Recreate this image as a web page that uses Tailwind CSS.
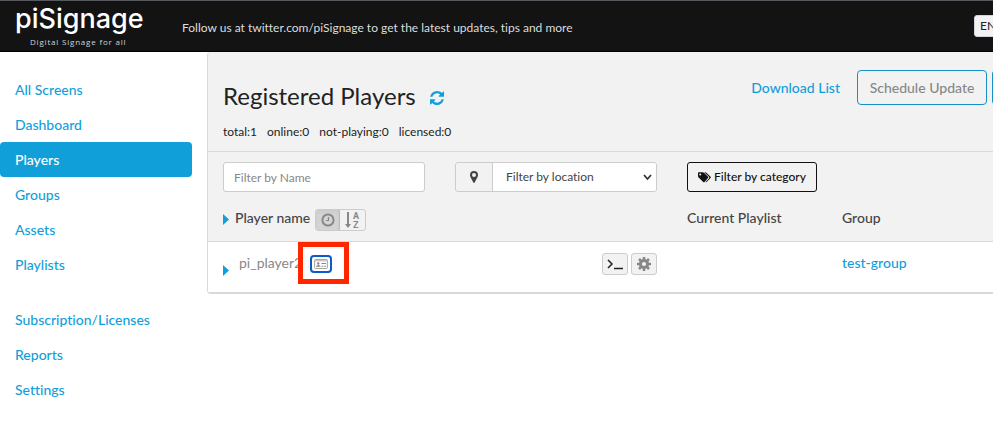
<!DOCTYPE html>
<html lang="en">
<head>
  <meta charset="UTF-8" />
  <meta name="viewport" content="width=device-width, initial-scale=1.0" />
  <title>Players | piSignage</title>
  <script src="https://cdn.jsdelivr.net/npm/@tailwindcss/browser@4"></script>
</head>
<body class="bg-white font-['Lato',sans-serif] text-sm text-[#444] overflow-x-hidden [font-variant-ligatures:none]">
  <!-- Top bar -->
  <header class="flex h-[52px] border-t border-t-[#55585c] border-b border-b-black bg-[#131313]">
    <a href="#" class="w-[182px] shrink-0 pl-[15px] text-white">
      <span class="block h-9 font-['Inter',sans-serif] text-[27px] leading-9 font-medium">piSignage</span>
      <span class="block pl-[15px] text-[8px] leading-[10px] tracking-widest text-gray-300 font-['Open_Sans',sans-serif]">Digital Signage for all</span>
    </a>
    <p class="pt-[19px] text-xs leading-4 text-[#ddd] whitespace-nowrap">Follow us at twitter.com/piSignage to get the latest updates, tips and more</p>
    <button class="ml-auto -mr-4 mt-[14px] h-[22px] w-[35px] shrink-0 rounded-[3px] border border-gray-300 bg-[#f2f2f2] pl-[5px] text-left text-xs text-[#222]">EN</button>
  </header>

  <div class="flex">
    <!-- Sidebar -->
    <nav class="w-48 shrink-0 pt-5 mr-[15px] text-[#119fda] font-medium">
      <ul class="leading-[35px]">
        <li><a href="#" class="block pl-[15px]">All Screens</a></li>
        <li><a href="#" class="block pl-[15px]">Dashboard</a></li>
        <li><a href="#" class="block pl-[15px] rounded bg-[#119fda] text-white">Players</a></li>
        <li><a href="#" class="block pl-[15px]">Groups</a></li>
        <li><a href="#" class="block pl-[15px]">Assets</a></li>
        <li><a href="#" class="block pl-[15px]">Playlists</a></li>
        <li class="mt-5"><a href="#" class="block pl-[15px]">Subscription/Licenses</a></li>
        <li><a href="#" class="block pl-[15px]">Reports</a></li>
        <li><a href="#" class="block pl-[15px]">Settings</a></li>
      </ul>
    </nav>

    <main class="grow min-w-0 self-start rounded-l border-l border-b-2 border-[#d9d9d9] bg-[#f2f2f2]">
      <div class="flex h-[100px] justify-between border-b border-[#d9d9d9] pl-[15px] overflow-hidden">
        <div class="pt-7">
          <h1 class="flex items-center gap-[14px] text-2xl leading-8 text-[#222]">Registered Players
            <button aria-label="Refresh" class="mt-1 text-[#119fda]">
              <svg class="size-[14px]" viewBox="0 0 1536 1536" fill="currentColor"><path d="M1511 928q0 5-1 7-64 268-268 434.500T764 1536q-146 0-282.500-55T238 1324l-129 129q-19 19-45 19t-45-19-19-45V960q0-26 19-45t45-19h448q26 0 45 19t19 45-19 45l-137 137q71 66 161 102t187 36q134 0 250-65t186-179q11-17 53-117 8-23 30-23h192q13 0 22.500 9.500t9.500 22.500zm25-800v448q0 26-19 45t-45 19h-448q-26 0-45-19t-19-45 19-45l138-138Q969 256 768 256q-134 0-250 65T332 500q-11 17-53 117-8 23-30 23H50q-13 0-22.500-9.500T18 608v-7q65-268 270-434.500T768 0q146 0 284 55.500T1297 212l130-129q19-19 45-19t45 19 19 45z"/></svg>
            </button>
          </h1>
          <p class="flex gap-[10px] pt-3 text-xs leading-4 text-[#222]">
            <span>total:1</span><span>online:0</span><span>not-playing:0</span><span>licensed:0</span>
          </p>
        </div>
        <div class="flex items-start gap-[5px] -mr-24 pt-[18px]">
          <a href="#" class="mr-3 leading-9 text-[#119fda] font-medium">Download List</a>
          <button class="h-[35px] w-[130px] rounded border border-[#1591c6] text-[#888] font-medium">Schedule Update</button>
          <button aria-label="More actions" class="h-[35px] w-[97px] rounded border border-[#1591c6] bg-[#119fda]"></button>
        </div>
      </div>

      <!-- Filters -->
      <form class="flex gap-[30px] px-[15px] py-[10px] text-xs">
        <input type="text" aria-label="Filter by Name" placeholder="Filter by Name" class="h-[30px] w-[202px] rounded-[3px] border border-[#ccc] bg-white px-[10px] placeholder:text-[#888]" />
        <div class="flex h-[30px] w-[202px] rounded-[3px] border border-[#ccc]">
          <label for="location" aria-label="Location" class="flex w-9 shrink-0 items-center justify-center">
            <svg class="h-3 w-2" viewBox="0 0 8 12" fill="#444"><path fill-rule="evenodd" d="M4 0a4 4 0 0 0-4 4c0 1 .3 1.600.6 2.200L3.300 11.600q.7.800 1.400 0L7.400 6.200C7.700 5.600 8 5 8 4a4 4 0 0 0-4-4zm0 2a2 2 0 1 1 0 4 2 2 0 0 1 0-4z"/></svg>
          </label>
          <div class="relative grow border-l border-[#ccc]">
            <select id="location" class="h-full w-full appearance-none rounded-r-[2px] bg-white pl-[13px] text-[#444]">
              <option>Filter by location</option>
            </select>
            <svg class="pointer-events-none absolute right-1 top-[11px] h-[7px] w-[9px]" viewBox="0 0 9 7" fill="none" stroke="#333" stroke-width="1.800"><path d="M1 1l3.500 4L8 1"/></svg>
          </div>
        </div>
        <button type="button" class="flex h-[30px] w-[130px] items-center justify-center gap-[3px] rounded-[3px] border border-[#111] text-[#111] font-medium whitespace-nowrap">
          <svg class="h-[11px] w-[13px]" viewBox="0 0 13 11" fill="currentColor"><path fill-rule="evenodd" d="M0 1.200Q0 .2 1 .2h3.600q.8 0 1.400.6l4 4q.6.600 0 1.300L6.500 9.900q-.7.600-1.300 0L.6 5.400Q0 4.800 0 4zM2.200 1.400a1 1 0 1 0 0 2 1 1 0 0 0 0-2z"/><path d="M6.300.2h.8q.7 0 1.300.6l4.100 4q.7.700 0 1.300L8.900 9.800q-.7.800-1.400.2l3.400-3.500q.8-1 0-1.800z"/></svg>
          Filter by category
        </button>
      </form>

      <table class="w-full table-fixed text-left">
        <colgroup>
          <col class="w-[394px]" /><col class="w-[85px]" /><col class="w-[155px]" /><col />
        </colgroup>
        <thead>
          <tr class="h-[39px] border-b border-[#d9d9d9]">
            <th class="pb-1 pl-[15px] font-medium">
              <div class="flex items-center">
                <svg class="mr-[6px] h-[11px] w-[6px]" viewBox="0 0 6 11" fill="#119fda"><path d="M0 0l6 5.500L0 11z"/></svg>
                <span class="pb-[2px]">Player name</span>
                <div class="ml-[5px] mt-[2px] flex h-[22px] w-[51px] overflow-hidden rounded-[3px] border border-[#ccc] text-[#888]">
                  <button aria-label="Sort by time" class="flex w-6 items-center justify-center border-r border-[#bbb] bg-[#d4d4d4] inset-shadow-sm">
                    <svg class="size-[14px]" viewBox="0 0 14 14" fill="none" stroke="currentColor"><circle cx="7" cy="7" r="5.600" stroke-width="2"/><path d="M7.500 4v3.500H5" stroke-width="1.200"/></svg>
                  </button>
                  <button aria-label="Sort by name" class="flex grow items-center justify-center">
                    <svg class="h-[18px] w-[15px]" viewBox="0 0 15 18" fill="currentColor"><path d="M2 1h2v12h2l-3 4-3-4h2z"/><text x="8" y="8" font-family="Roboto" font-size="9" font-weight="bold">A</text><text x="8" y="17" font-family="Roboto" font-size="9" font-weight="bold">Z</text></svg>
                  </button>
                </div>
              </div>
            </th>
            <th></th>
            <th class="pb-[6px] font-medium">Current Playlist</th>
            <th class="pb-[6px] font-medium">Group</th>
          </tr>
        </thead>
        <tbody class="bg-white">
          <tr class="h-[51px]">
            <td class="relative pl-[15px]">
              <div class="flex items-center">
                <svg class="mr-[10px] mt-2 h-[11px] w-[6px]" viewBox="0 0 6 11" fill="#119fda"><path d="M0 0l6 5.500L0 11z"/></svg>
                <span class="pb-[7px] text-[#888]">pi_player2</span>
              </div>
              <!-- highlight around the licence card button -->
              <div class="absolute left-[90px] top-0 flex h-[42px] w-[51px] border-5 border-[#ff2600] bg-white pl-[7px] pt-2">
                <button aria-label="License" class="flex h-[18px] w-[22px] items-center justify-center rounded border-2 border-[#0b5cc4] bg-white">
                  <svg class="h-[10px] w-[14px]" viewBox="0 0 15 11"><rect x=".5" y=".5" width="14" height="10" rx="1" fill="#fff" stroke="#999"/><path d="M1 2h13" stroke="#aaa"/><circle cx="4.500" cy="5" r="1.300" fill="#888"/><path d="M2 8.500q0-2 2.500-2t2.500 2zM8 4.500h5v1H8zM8 7.500h2v1H8zM11 7.500h2v1h-2z" fill="#888"/></svg>
                </button>
              </div>
            </td>
            <td>
              <div class="flex gap-[3px] pb-[6px]">
                <button aria-label="Shell" class="flex h-[22px] w-[26px] items-center justify-center rounded-[3px] border border-[#ccc] bg-[#f2f2f2]">
                  <svg class="h-3 w-4" viewBox="0 0 16 12" fill="none" stroke="#222" stroke-width="1.500"><path d="M1 2l4 4-4 4M7 10.500h9"/></svg>
                </button>
                <button aria-label="Settings" class="flex h-[22px] w-[26px] items-center justify-center rounded-[3px] border border-[#ccc] bg-[#f2f2f2]">
                  <svg class="size-[14px]" viewBox="0 0 14 14" fill="none" stroke="#888"><circle cx="7" cy="7" r="3.600" stroke-width="3"/><path d="M7 0v3M7 11v3M0 7h3M11 7h3M2 2l2 2M10 10l2 2M2 12l2-2M10 4l2-2" stroke-width="2.600"/></svg>
                </button>
              </div>
            </td>
            <td></td>
            <td class="pb-[7px]"><a href="#" class="text-[#119fda] font-medium">test-group</a></td>
          </tr>
        </tbody>
      </table>
    </main>
  </div>
</body>
</html>
